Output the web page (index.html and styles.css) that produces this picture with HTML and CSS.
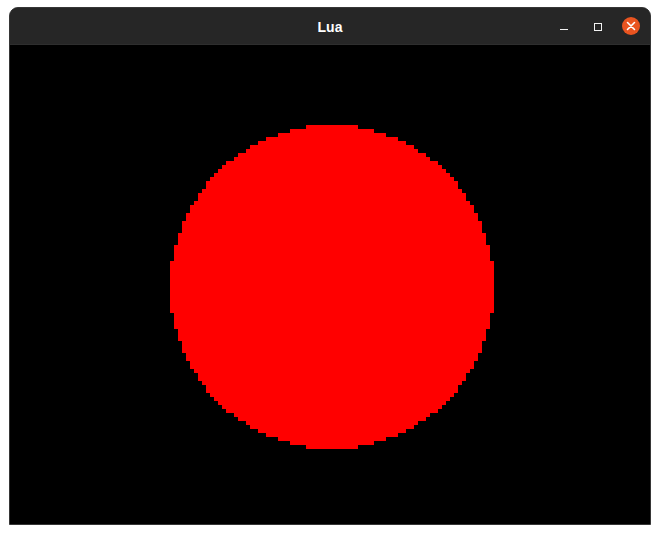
FILE: index.html
```html
<!DOCTYPE html>
<html>
<head>
<meta charset="utf-8">
<title>Lua</title>
<link rel="stylesheet" href="styles.css">
</head>
<body>
<div class="window">
  <div class="titlebar">
    <div class="spacer"></div>
    <div class="title">Lua</div>
    <div class="controls">
      <svg class="btn-min" width="8" height="8" viewBox="0 0 8 8"><line x1="0" y1="6.5" x2="8" y2="6.5" stroke="#f2f2f2" stroke-width="1"/></svg>
      <svg class="btn-max" width="8" height="8" viewBox="0 0 8 8"><rect x="0.5" y="0.5" width="7" height="7" fill="none" stroke="#f2f2f2" stroke-width="1"/></svg>
      <svg class="btn-close" width="18" height="18" viewBox="0 0 18 18"><circle cx="9" cy="9" r="9" fill="#e95420"/><path d="M5.5 5.5 L12.5 12.5 M12.5 5.5 L5.5 12.5" stroke="#ffffff" stroke-width="1.6" stroke-linecap="round"/></svg>
    </div>
  </div>
  <div class="content">
    <canvas id="screen" class="screen" width="160" height="120"></canvas>
  </div>
</div>
<script src="script.js"></script>
</body>
</html>
```

FILE: styles.css
```css
html, body {
  margin: 0;
  padding: 0;
  background: #ffffff;
}
body {
  padding: 7px 0 0 9px;
}
.window {
  width: 640px;
  border: 1px solid #363636;
  border-radius: 9px 9px 0 0;
  background: #262626;
  overflow: hidden;
}
.titlebar {
  height: 36px;
  border-bottom: 1px solid #2e2e2e;
  display: grid;
  grid-template-columns: 1fr auto 1fr;
  align-items: center;
  background: #262626;
}
.title {
  font-family: "Liberation Sans", Arial, sans-serif;
  font-weight: bold;
  font-size: 14px;
  color: #ffffff;
  padding-top: 1px;
}
.controls {
  display: flex;
  justify-content: flex-end;
  align-items: center;
  padding-right: 10px;
}
.controls svg {
  display: block;
}
.btn-min {
  margin-top: 1px;
}
.btn-max {
  margin-left: 26px;
  margin-top: 1px;
}
.btn-close {
  margin-left: 20px;
}
.content {
  height: 479px;
  overflow: hidden;
  background: #000000;
}
.screen {
  display: block;
  width: 640px;
  height: 480px;
  image-rendering: pixelated;
}
```

FILE: script.js
```js
(function () {
  var c = document.getElementById('screen');
  var ctx = c.getContext('2d');
  ctx.fillStyle = '#000000';
  ctx.fillRect(0, 0, 160, 120);
  ctx.fillStyle = '#ff0000';
  for (var j = 0; j < 120; j++) {
    for (var i = 0; i < 160; i++) {
      var dx = i - 80, dy = j - 60;
      if (dx * dx + dy * dy < 1640) {
        ctx.fillRect(i, j, 1, 1);
      }
    }
  }
})();
```
